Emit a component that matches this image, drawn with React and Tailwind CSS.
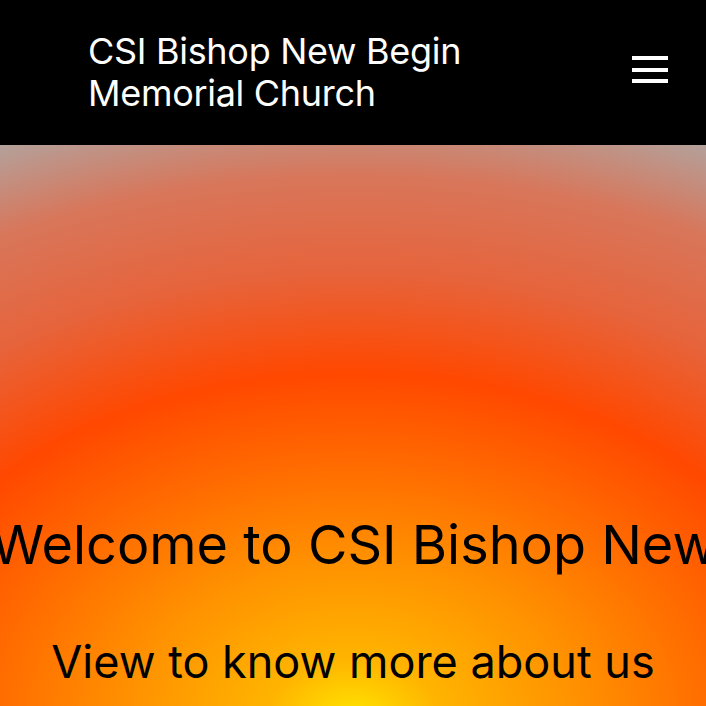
import React from 'react';

const heroBg =
    'bg-[radial-gradient(ellipse_960px_680px_at_50%_575px,#ffe600_0%,#ffb400_9%,#ff9000_24%,#ff6a00_38%,#ff4800_51%,#e6643c_66%,#d8765a_80%,#b4a09a_92%)]';

const App = () => {
    return (
        <div className="w-full min-h-screen font-['Inter',sans-serif] overflow-hidden">
            {/* Header */}
            <header className="h-[145px] bg-black flex items-center justify-between pl-[88px] pr-[38px]">
                <h1 className="text-white text-[36px] leading-[42px] font-normal tracking-[-0.3px] pb-[2px]">
                    CSI Bishop New Begin
                    <br />
                    Memorial Church
                </h1>
                <button className="flex flex-col gap-[7.5px] w-[36px] mb-[6px]" aria-label="menu">
                    <span className="block h-[4px] w-full bg-white" />
                    <span className="block h-[4px] w-full bg-white" />
                    <span className="block h-[4px] w-full bg-white" />
                </button>
            </header>

            {/* Hero */}
            <section className={`h-[561px] ${heroBg} flex flex-col items-center pt-[369px]`}>
                <div className="w-full flex justify-start overflow-hidden">
                    <h2 className="whitespace-nowrap text-black text-[54px] leading-[62px] font-normal shrink-0 -ml-[9px]">
                        Welcome to CSI Bishop New Begin Memorial Church
                    </h2>
                </div>
                <p className="mt-[60px] text-black text-[45px] leading-[52px] font-normal whitespace-nowrap">
                    View to know more about us
                </p>
            </section>
        </div>
    );
};

export default App;
